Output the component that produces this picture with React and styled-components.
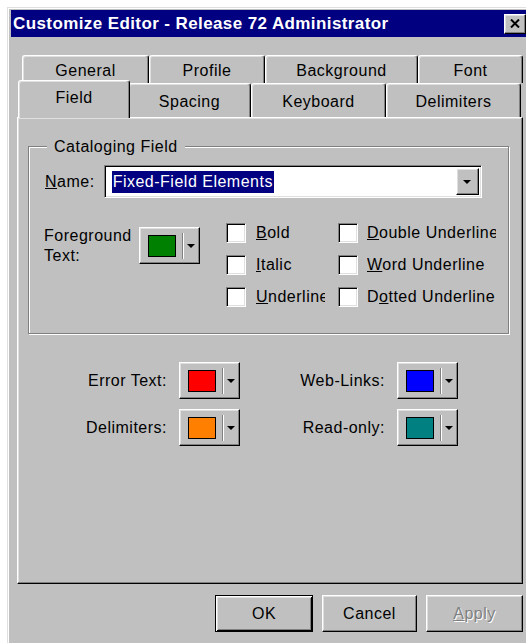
import React from 'react';
import styled, { createGlobalStyle } from 'styled-components';

const GlobalStyle = createGlobalStyle`
  html, body {
    margin: 0;
    background: #fff;
  }
  body {
    overflow: hidden;
    font-family: "Liberation Sans", Arial, sans-serif;
  }
`;

const Window = styled.div`
  margin: 7px 0 0 7px;
  width: 526px;
  height: 660px;
  box-sizing: border-box;
  padding: 2px 3px 3px;
  background: #c0c0c0;
  border: 1px solid #dfdfdf;
  border-right-color: #000;
  border-bottom-color: #000;
  box-shadow: inset 1px 1px #fff;
  color: #000;
  font-size: 16px;
  letter-spacing: 0.5px;
`;

const TitleBar = styled.div`
  height: 27px;
  display: flex;
  align-items: center;
  justify-content: space-between;
  padding-left: 2px;
  background: #000080;
`;

const Title = styled.span`
  color: #fff;
  font-weight: bold;
  font-size: 17px;
  letter-spacing: 0.4px;
  white-space: nowrap;
`;

const raised = `
  border: 1px solid;
  border-color: #fff #000 #000 #fff;
  box-shadow: inset -1px -1px #808080, inset 1px 1px #dfdfdf;
  background: #c0c0c0;
`;

const sunken = `
  border: 1px solid;
  border-color: #808080 #fff #fff #808080;
  box-shadow: inset 1px 1px #000, inset -1px -1px #dfdfdf;
`;

const CloseButton = styled.div`
  ${raised}
  box-sizing: border-box;
  width: 22px;
  height: 20px;
  margin-right: 3px;
  display: flex;
  align-items: center;
  justify-content: center;
`;

const Body = styled.div`
  padding: 18px 6px 0 6px;
`;

const TabRow = styled.div`
  display: flex;
  align-items: flex-end;
  height: ${p => p.$h}px;
  padding-left: ${p => p.$indent}px;
`;

const Tab = styled.div`
  box-sizing: border-box;
  width: ${p => p.$w}px;
  height: 100%;
  display: flex;
  align-items: center;
  justify-content: center;
  border-top: 1px solid #fff;
  border-left: 1px solid #fff;
  border-right: 1px solid #000;
  border-radius: 3px 3px 0 0;
  box-shadow: inset -1px 0 #808080, inset 1px 1px #dfdfdf;
  background: #c0c0c0;
  white-space: nowrap;
  padding-top: ${p => (p.$active ? 0 : 2)}px;
  ${p => p.$active && `
    position: relative;
    z-index: 2;
    width: ${p.$w + 4}px;
    height: calc(100% + 4px);
    margin: 0 -2px -1px;
    padding-bottom: 4px;
  `}
`;

const Panel = styled.div`
  box-sizing: border-box;
  width: 506px;
  height: 467px;
  border: 1px solid;
  border-color: #fff #000 #000 #fff;
  box-shadow: inset -1px -1px #808080, inset 1px 1px #dfdfdf;
  padding: 28px 13px 0 10px;
`;

const GroupBox = styled.div`
  position: relative;
  box-sizing: border-box;
  height: 188px;
  border: 1px solid #808080;
  box-shadow: inset 1px 1px #fff, 1px 1px #fff;
  padding: 18px 0 0 16px;
`;

const Legend = styled.span`
  position: absolute;
  top: -10px;
  left: 18px;
  padding: 0 7px;
  line-height: 20px;
  background: #c0c0c0;
`;

const NameRow = styled.div`
  display: flex;
  align-items: center;
`;

const FieldLabel = styled.label`
  margin-right: 9px;
`;

const Combo = styled.div`
  ${sunken}
  box-sizing: border-box;
  width: 378px;
  height: 33px;
  background: #fff;
  display: flex;
  align-items: center;
  justify-content: space-between;
  padding: 0 2px 0 7px;
`;

const Selected = styled.span`
  background: #000080;
  color: #fff;
  line-height: 22px;
  padding: 0 1px;
`;

const DropButton = styled.div`
  ${raised}
  box-sizing: border-box;
  width: 23px;
  height: 27px;
  display: flex;
  align-items: center;
  justify-content: center;
`;

const Arrow = styled.span`
  width: 0;
  height: 0;
  border-left: 4px solid transparent;
  border-right: 4px solid transparent;
  border-top: 4px solid #000;
`;

const FormatArea = styled.div`
  display: flex;
  align-items: flex-start;
  margin-top: 18px;
  margin-left: -1px;
`;

const FgLabel = styled.div`
  width: 95px;
  padding-top: 10px;
  line-height: 20px;
`;

const ColorButton = styled.div`
  ${raised}
  box-sizing: border-box;
  width: 61px;
  height: 37px;
  margin-top: ${p => p.$top || 0}px;
  display: flex;
  align-items: center;
  padding-left: 8px;
`;

const Swatch = styled.span`
  box-sizing: border-box;
  width: 28px;
  height: 22px;
  border: 1px solid #000;
  background: ${p => p.$color};
`;

const Divider = styled.span`
  width: 1px;
  height: 26px;
  margin: 0 4px 0 6px;
  background: #808080;
  box-shadow: 1px 0 #fff;
`;

const CheckGrid = styled.div`
  display: grid;
  grid-template-columns: 112px 160px;
  grid-auto-rows: 32px;
  align-items: center;
  margin: 1px 0 0 26px;
`;

const CheckItem = styled.div`
  display: flex;
  align-items: center;
  overflow: hidden;
`;

const Box = styled.span`
  ${sunken}
  flex: none;
  box-sizing: border-box;
  width: 20px;
  height: 20px;
  background: #fff;
`;

const CheckText = styled.span`
  margin-left: ${p => p.$gap}px;
  white-space: nowrap;
  overflow: hidden;
  width: ${p => p.$w}px;
`;

const ColorGrid = styled.div`
  display: grid;
  grid-template-columns: 136px 60px 134px 60px;
  grid-auto-rows: 37px;
  column-gap: 12px;
  row-gap: 10px;
  align-items: center;
  margin: 28px 0 0 3px;
`;

const RightLabel = styled.span`
  text-align: right;
  white-space: nowrap;
`;

const ButtonRow = styled.div`
  display: flex;
  justify-content: flex-end;
  width: 506px;
  gap: 9px;
  margin-top: 11px;
`;

const Button = styled.div`
  ${raised}
  box-sizing: border-box;
  width: ${p => p.$w}px;
  height: 37px;
  display: flex;
  align-items: center;
  justify-content: center;
  ${p => p.$default && `
    border-color: #000;
    box-shadow: inset 1px 1px #fff, inset -1px -1px #000, inset 2px 2px #dfdfdf, inset -2px -2px #808080;
  `}
  ${p => p.$disabled && `
    color: #808080;
    text-shadow: 1px 1px #fff;
  `}
`;

const checks = [
  [<><u>B</u>old</>, <><u>D</u>ouble Underline</>],
  [<><u>I</u>talic</>, <><u>W</u>ord Underline</>],
  [<><u>U</u>nderline</>, <>D<u>o</u>tted Underline</>],
];

const colors = [
  ['Error Text:', '#ff0000', 'Web-Links:', '#0000ff'],
  ['Delimiters:', '#ff8000', 'Read-only:', '#008080'],
];

const ColorPick = ({ color, top }) => (
  <ColorButton $top={top}>
    <Swatch $color={color} />
    <Divider />
    <Arrow />
  </ColorButton>
);

export default function App() {
  return (
    <>
      <GlobalStyle />
      <Window>
        <TitleBar>
          <Title>Customize Editor - Release 72 Administrator</Title>
          <CloseButton>
            <svg width="10" height="9" viewBox="0 0 10 9">
              <path d="M1 0.5 L9 8.5 M9 0.5 L1 8.5" stroke="#000" strokeWidth="2" />
            </svg>
          </CloseButton>
        </TitleBar>
        <Body>
          <TabRow $h={28} $indent={5}>
            <Tab $w={127}>General</Tab>
            <Tab $w={116}>Profile</Tab>
            <Tab $w={153}>Background</Tab>
            <Tab $w={105}>Font</Tab>
          </TabRow>
          <TabRow $h={34} $indent={3}>
            <Tab $w={108} $active>Field</Tab>
            <Tab $w={123}>Spacing</Tab>
            <Tab $w={135}>Keyboard</Tab>
            <Tab $w={135}>Delimiters</Tab>
          </TabRow>
          <Panel>
            <GroupBox>
              <Legend>Cataloging Field</Legend>
              <NameRow>
                <FieldLabel><u>N</u>ame:</FieldLabel>
                <Combo>
                  <Selected>Fixed-Field Elements</Selected>
                  <DropButton><Arrow /></DropButton>
                </Combo>
              </NameRow>
              <FormatArea>
                <FgLabel>Foreground<br />Text:</FgLabel>
                <ColorPick color="#008000" top={11} />
                <CheckGrid>
                  {checks.map(([a, b], i) => (
                    <React.Fragment key={i}>
                      <CheckItem>
                        <Box />
                        <CheckText $gap={10} $w={69}>{a}</CheckText>
                      </CheckItem>
                      <CheckItem>
                        <Box />
                        <CheckText $gap={9} $w={129}>{b}</CheckText>
                      </CheckItem>
                    </React.Fragment>
                  ))}
                </CheckGrid>
              </FormatArea>
            </GroupBox>
            <ColorGrid>
              {colors.map(([l1, c1, l2, c2]) => (
                <React.Fragment key={l1}>
                  <RightLabel>{l1}</RightLabel>
                  <ColorPick color={c1} />
                  <RightLabel>{l2}</RightLabel>
                  <ColorPick color={c2} />
                </React.Fragment>
              ))}
            </ColorGrid>
          </Panel>
          <ButtonRow>
            <Button $w={98} $default>OK</Button>
            <Button $w={95}>Cancel</Button>
            <Button $w={97} $disabled><span><u>A</u>pply</span></Button>
          </ButtonRow>
        </Body>
      </Window>
    </>
  );
}
